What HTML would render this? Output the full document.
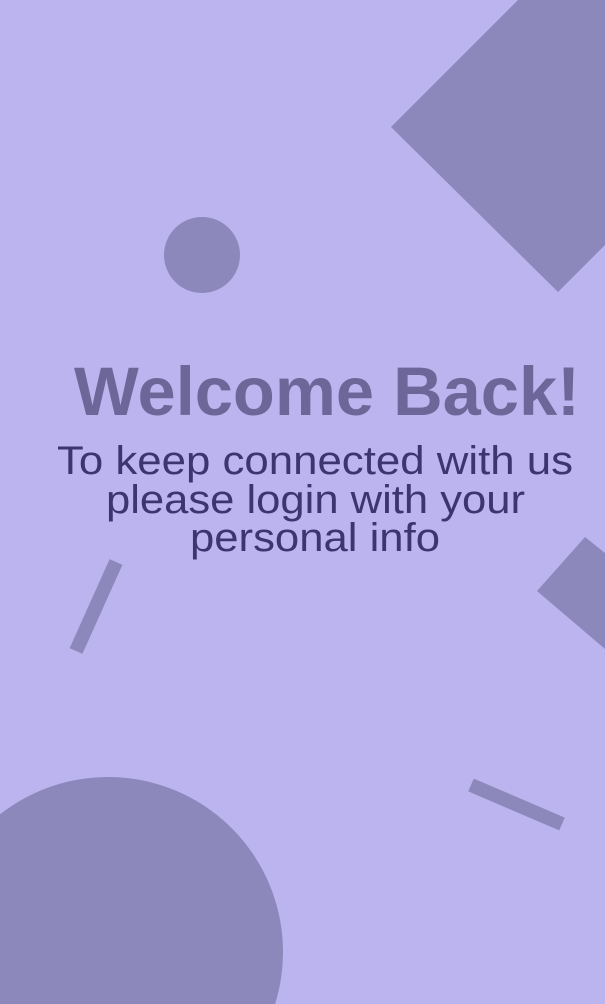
<!DOCTYPE html>
<html><head><style>
html,body{margin:0;padding:0;width:605px;height:1004px;overflow:hidden;background:#bcb4ee;}
svg{display:block;}
</style></head><body>
<svg width="605" height="1004" viewBox="0 0 605 1004" xmlns="http://www.w3.org/2000/svg">
<rect width="605" height="1004" fill="#bcb4ee"/>
<g fill="#8d88bb">
<polygon points="391,127 518,0 605,0 605,245 558,292"/>
<circle cx="202" cy="255" r="38"/>
<polygon points="537,591 585,537 605,553 605,649"/>
<path d="M0,814.3 A175,175 0 0,1 275.1,1004 L0,1004 Z"/>
</g>
<g stroke="#8d88bb" stroke-width="14">
<line x1="76" y1="651" x2="116" y2="562"/>
<line x1="471" y1="785" x2="562" y2="824"/>
</g>
<text x="74" y="415" textLength="506" lengthAdjust="spacingAndGlyphs" font-family="Liberation Sans, sans-serif" font-weight="bold" font-size="69" fill="#6c6798">Welcome Back!</text>
<g font-family="Liberation Sans, sans-serif" font-size="40" fill="#3c3570">
<text x="57" y="474" textLength="516" lengthAdjust="spacingAndGlyphs">To keep connected with us</text>
<text x="106" y="513" textLength="419" lengthAdjust="spacingAndGlyphs">please login with your</text>
<text x="190" y="551" textLength="250" lengthAdjust="spacingAndGlyphs">personal info</text>
</g>
</svg>
</body></html>
